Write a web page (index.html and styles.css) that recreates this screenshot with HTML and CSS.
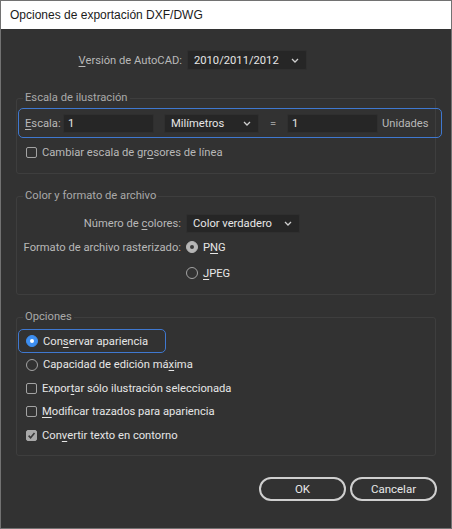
FILE: index.html
```
<!DOCTYPE html>
<html lang="es">
<head>
<meta charset="utf-8">
<title>Opciones de exportación DXF/DWG</title>
<link rel="stylesheet" href="styles.css">
</head>
<body>
<div class="window">
  <div class="titlebar">Opciones de exportación DXF/DWG</div>
  <div class="content">
    <div class="version-row">
      <span class="lbl lbl-version"><u>V</u>ersión de AutoCAD:</span>
      <div class="select w-version"><span class="val">2010/2011/2012</span><svg class="chev" width="8" height="5" viewBox="0 0 8 5"><path d="M1 1l3 3 3-3" fill="none" stroke="#cfcfcf" stroke-width="1.3"/></svg></div>
    </div>

    <fieldset class="group g1">
      <legend>Escala de ilustración</legend>
      <div class="focus-row scale-row">
        <span class="scale-lbl"><u>E</u>scala:</span>
        <div class="input"><span class="val">1</span></div>
        <div class="select w-units"><span class="val">Milímetros</span><svg class="chev" width="8" height="5" viewBox="0 0 8 5"><path d="M1 1l3 3 3-3" fill="none" stroke="#cfcfcf" stroke-width="1.3"/></svg></div>
        <span class="eq">=</span>
        <div class="input"><span class="val">1</span></div>
        <span class="units">Unidades</span>
      </div>
      <div class="opt-row g1-check"><span class="checkbox"></span><span>Cambiar escala de gr<u>o</u>sores de línea</span></div>
    </fieldset>

    <fieldset class="group g2">
      <legend>Color y formato de archivo</legend>
      <div class="form-grid">
        <span class="lbl">Número de <u>c</u>olores:</span>
        <div class="select w-colors"><span class="val">Color verdadero</span><svg class="chev" width="8" height="5" viewBox="0 0 8 5"><path d="M1 1l3 3 3-3" fill="none" stroke="#cfcfcf" stroke-width="1.3"/></svg></div>
        <span class="lbl">Formato de archivo rasterizado:</span>
        <div class="opt-row"><span class="radio on-gray"></span><span class="bright">P<u>N</u>G</span></div>
        <span></span>
        <div class="opt-row"><span class="radio"></span><span class="bright"><u>J</u>PEG</span></div>
      </div>
    </fieldset>

    <fieldset class="group g3">
      <legend>Opciones</legend>
      <div class="focus-row opt-focus"><span class="radio on-blue"></span><span class="bright">Con<u>s</u>ervar apariencia</span></div>
      <div class="opt-row list-row"><span class="radio"></span><span class="bright">Capacidad de edición má<u>x</u>ima</span></div>
      <div class="opt-row list-row"><span class="checkbox"></span><span class="bright">Expor<u>t</u>ar sólo ilustración seleccionada</span></div>
      <div class="opt-row list-row"><span class="checkbox"></span><span class="bright"><u>M</u>odificar trazados para apariencia</span></div>
      <div class="opt-row list-row"><span class="checkbox checked"><svg width="11" height="11" viewBox="0 0 11 11"><path d="M2.6 5.6l2 2.1 3.9-4.6" fill="none" stroke="#3a3a3a" stroke-width="1.6"/></svg></span><span class="bright">Con<u>v</u>ertir texto en contorno</span></div>
    </fieldset>

    <div class="buttons">
      <button class="btn">OK</button>
      <button class="btn">Cancelar</button>
    </div>
  </div>
</div>
</body>
</html>
```

FILE: styles.css
```
html, body {
  margin: 0;
  padding: 0;
  background: #323232;
}

.window {
  width: 452px;
  height: 529px;
  box-sizing: border-box;
  border: 1px solid #727272;
  background: #323232;
  display: flex;
  flex-direction: column;
  overflow: hidden;
}

.titlebar {
  height: 28px;
  flex: none;
  background: #ffffff;
  color: #1b1b1b;
  font-family: "Liberation Sans", Arial, sans-serif;
  font-size: 12px;
  padding-left: 9px;
  display: flex;
  align-items: center;
}

.content {
  padding: 21px 15px 0;
  font-family: Roboto, "Liberation Sans", sans-serif;
  font-size: 11.2px;
  color: #b8b8b8;
  white-space: nowrap;
}

u {
  text-decoration: underline;
  text-underline-offset: 2px;
}

.val, .bright {
  color: #e6e6e6;
}

/* version row */
.version-row {
  display: flex;
  align-items: center;
  height: 20px;
}

.lbl-version {
  width: 166px;
  text-align: right;
  flex: none;
}

.version-row .select {
  margin-left: 5px;
}

/* select & input */
.select, .input {
  box-sizing: border-box;
  height: 19px;
  background: #262626;
  border: 1px solid #2f2f2f;
  border-radius: 2px;
  display: flex;
  align-items: center;
  flex: none;
}

.select {
  padding: 0 7px 0 6px;
  justify-content: space-between;
}

.input {
  width: 91px;
  padding-left: 4px;
}

.w-version { width: 120px; height: 20px; }
.w-units { width: 95px; margin-left: 10px; }
.w-colors { width: 114px; }

.chev { display: block; }

/* groups */
.group {
  margin: 21px 0 0;
  padding: 0;
  border: 1px solid #3e3e3e;
  border-radius: 3px;
  min-width: 0;
}

.group legend {
  margin-left: 6px;
  padding: 0 2px;
  line-height: 14px;
  color: #a9a9a9;
}

.g2, .g3 { margin-top: 15px; }

.focus-row {
  box-sizing: border-box;
  border: 1px solid #3f78d0;
  border-radius: 5px;
  display: flex;
  align-items: center;
}

.scale-row {
  margin: 3px -7px 0 1px;
  height: 30px;
  padding-left: 6px;
}

.scale-lbl {
  width: 38px;
  flex: none;
}

.eq {
  width: 28px;
  text-align: center;
  flex: none;
  color: #9a9a9a;
}

.units {
  margin-left: 4px;
}

.opt-row {
  display: flex;
  align-items: center;
  gap: 5px;
}

.g1-check {
  height: 20px;
  margin: 4px 0 11px 9px;
}

.checkbox {
  box-sizing: border-box;
  width: 11px;
  height: 11px;
  border: 1px solid #a3a3a3;
  border-radius: 2px;
  flex: none;
  display: flex;
}

.checkbox.checked {
  background: #a9a9a9;
  border-color: #a9a9a9;
}

.checkbox.checked svg {
  margin: -1px;
}

.radio {
  box-sizing: border-box;
  width: 12px;
  height: 12px;
  border: 1.5px solid #a3a3a3;
  border-radius: 50%;
  flex: none;
  position: relative;
}

.radio.on-gray {
  background: #b5b5b5;
  border-color: #b5b5b5;
}

.radio.on-blue {
  background: #3d8ef0;
  border-color: #3d8ef0;
}

.radio.on-gray::after, .radio.on-blue::after {
  content: "";
  position: absolute;
  left: 50%;
  top: 50%;
  width: 4px;
  height: 4px;
  margin: -2px 0 0 -2px;
  border-radius: 50%;
}

.radio.on-gray::after { background: #3a3a3a; }
.radio.on-blue::after { background: #ffffff; }

/* group 2 grid */
.form-grid {
  display: grid;
  grid-template-columns: 157px auto;
  column-gap: 5px;
  align-items: center;
  justify-items: start;
  padding: 10px 0 9px 7px;
  grid-template-rows: 20px 24px 24px;
  row-gap: 2px;
}

.form-grid .lbl {
  justify-self: end;
}

/* group 3 */
.opt-focus {
  width: 148px;
  height: 24px;
  margin: 5px 0 0 1px;
  padding-left: 7px;
  gap: 5px;
}

.list-row {
  height: 23.5px;
  margin-left: 9px;
}

.list-row:last-child {
  margin-bottom: 8px;
}

/* buttons */
.buttons {
  display: flex;
  justify-content: flex-end;
  gap: 4px;
  margin-top: 21px;
  margin-right: -1px;
}

.btn {
  width: 87px;
  height: 24px;
  box-sizing: border-box;
  border: 2px solid #cfcfcf;
  border-radius: 12px;
  background: transparent;
  color: #e8e8e8;
  font-family: Roboto, "Liberation Sans", sans-serif;
  font-size: 11.5px;
  padding: 0;
}
```
